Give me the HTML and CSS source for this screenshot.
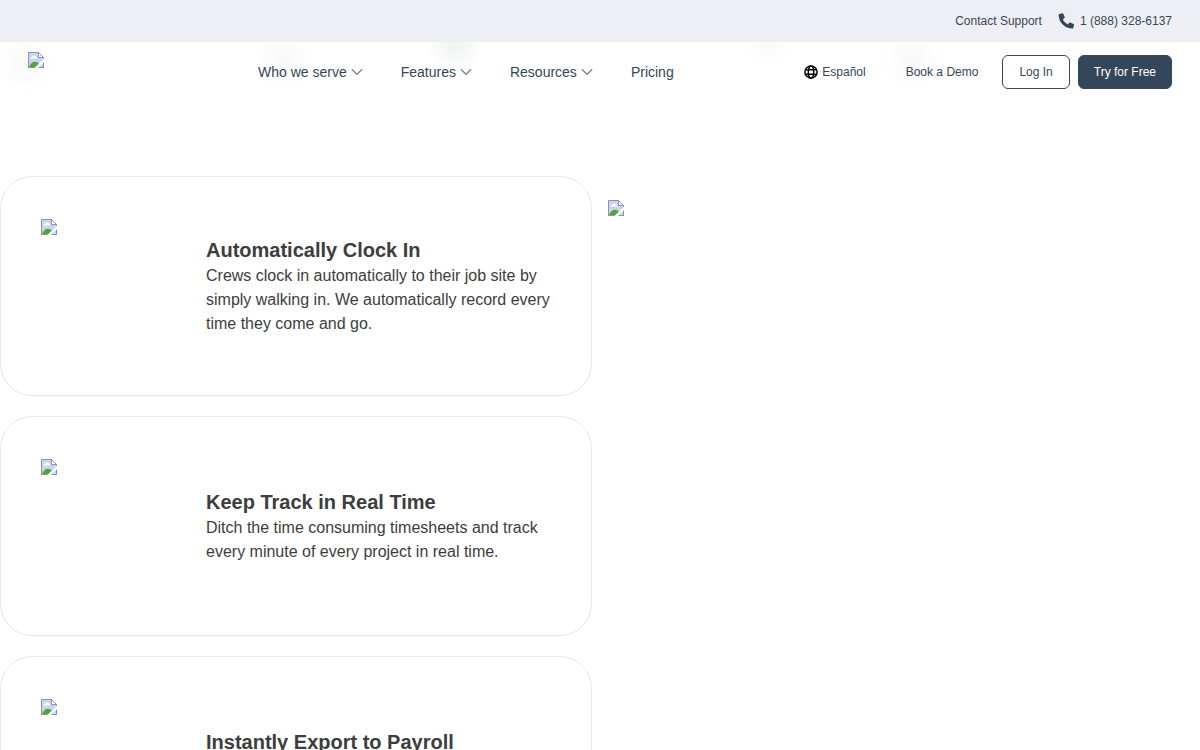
FILE: index.html
```html
<!DOCTYPE html>
<html lang="en">
<head>
    <meta charset="UTF-8">
    <meta name="viewport" content="width=device-width, initial-scale=1.0">
    <title>Time Tracking</title>
    <link rel="stylesheet" href="styles.css">
</head>
<body>
    <svg class="sprite" width="0" height="0" aria-hidden="true">
        <symbol id="picture" viewBox="0 0 16 16">
            <path d="M.5.5h10l5 5v10H.5z" fill="#c6d5f5"/>
            <path d="M2.500 6.500c0-1.200.8-2 2-2 .5-1.400 3-1.400 3.500.2 1.200 0 1.500 1.800.2 1.800z" fill="#fff"/>
            <path d="M1 15.500c1-4 3.500-5.800 6-5.800 2 0 3.500 1 4.500 2.300l-3.500 3.500z" fill="#55a637"/>
            <path d="M10.500.5v5h5z" fill="#fff"/>
            <path d="M.5 16V.5h10l5 5V16M10.500.5v5h5M0 15.500h16" fill="none" stroke="#9093a3"/>
            <path d="M16 6.500V10l-6 6H6.500z" fill="#fff"/>
        </symbol>
        <symbol id="chevron" viewBox="0 0 12 8">
            <path d="M.8 1.300l5.200 5 5.200-5" fill="none" stroke="#7d848b" stroke-width="1.300"/>
        </symbol>
    </svg>

    <header class="header">
        <div class="topbar">
            <a href="#">Contact Support</a>
            <a href="#" class="phone">
                <svg width="16" height="16" viewBox="0 0 16 16" aria-hidden="true">
                    <path d="M1.300.9 4.300.2c.4-.1.800.1 1 .5l1.400 3.400c.1.3 0 .7-.2.900L4.800 6.400a11 11 0 0 0 5 5l1.400-1.700c.2-.3.6-.4.900-.2l3.400 1.400c.4.200.6.600.5 1l-.7 3c-.1.400-.4.700-.8.700C6.900 15.600.6 9.300.6 1.700c0-.4.3-.7.700-.8z" fill="#34475a"/>
                </svg>
                1 (888) 328-6137
            </a>
        </div>
        <div class="navbar">
            <a href="#" class="logo" aria-label="Home">
                <svg width="16" height="16"><use href="#picture"/></svg>
            </a>
            <nav class="menu">
                <button type="button">Who we serve <svg width="12" height="8"><use href="#chevron"/></svg></button>
                <button type="button">Features <svg width="12" height="8"><use href="#chevron"/></svg></button>
                <button type="button">Resources <svg width="12" height="8"><use href="#chevron"/></svg></button>
                <a href="#">Pricing</a>
            </nav>
            <div class="actions">
                <a href="#" class="language">
                    <svg width="14" height="14" viewBox="0 0 14 14" fill="none" stroke="#000" stroke-width="1.500" aria-hidden="true">
                        <circle cx="7" cy="7" r="6.100"/>
                        <ellipse cx="7" cy="7" rx="2.700" ry="6.100"/>
                        <path d="M1.300 4.800h11.400M1.300 9.200h11.400"/>
                    </svg>
                    Español
                </a>
                <a href="#" class="demo">Book a Demo</a>
                <button type="button" class="btn">Log In</button>
                <button type="button" class="btn btn-dark">Try for Free</button>
            </div>
        </div>
    </header>

    <main class="features">
        <div class="cards">
            <section class="card">
                <div class="card-image">
                    <svg width="16" height="16" aria-hidden="true"><use href="#picture"/></svg>
                </div>
                <div class="card-text">
                    <h2>Automatically Clock In</h2>
                    <p>Crews clock in automatically to their job site by simply walking in. We automatically record every time they come and go.</p>
                </div>
            </section>
            <section class="card">
                <div class="card-image">
                    <svg width="16" height="16" aria-hidden="true"><use href="#picture"/></svg>
                </div>
                <div class="card-text">
                    <h2>Keep Track in Real Time</h2>
                    <p>Ditch the time consuming timesheets and track every minute of every project in real time.</p>
                </div>
            </section>
            <section class="card">
                <div class="card-image">
                    <svg width="16" height="16" aria-hidden="true"><use href="#picture"/></svg>
                </div>
                <div class="card-text">
                    <h2>Instantly Export to Payroll</h2>
                    <p>Send approved hours to your payroll provider as soon as the pay period ends.</p>
                </div>
            </section>
        </div>
        <div class="preview">
            <svg width="16" height="16" aria-hidden="true"><use href="#picture"/></svg>
        </div>
    </main>
</body>
</html>
```
FILE: styles.css
```css
body {
    font-family: "Liberation Sans", Arial, sans-serif;
    margin: 0;
    color: #3d3d3d;
    background-color: #fff;
}
svg {
    display: block;
    flex-shrink: 0;
}
.sprite {
    position: absolute;
}
a {
    color: #34475a;
    text-decoration: none;
}
button {
    font-family: inherit;
    cursor: pointer;
}
.header {
    position: sticky;
    top: 0;
    z-index: 10;
}
.topbar {
    display: flex;
    justify-content: flex-end;
    align-items: center;
    gap: 16px;
    height: 42px;
    padding: 0 28px;
    background-color: #eeeff4;
    font-size: 12px;
}
.phone {
    display: flex;
    align-items: center;
    gap: 6px;
}
.navbar {
    display: grid;
    grid-template-columns: 230px 1fr auto;
    align-items: center;
    height: 60px;
    padding: 0 28px;
    background-color: #fff;
    background-image:
        radial-gradient(28px 28px at 25px 22px, #f8f8f8, transparent),
        radial-gradient(30px 30px at 283px 18px, #f8f8f8, transparent),
        radial-gradient(30px 28px at 455px 3px, #f1f2f2, transparent),
        radial-gradient(28px 22px at 768px 0, #f9f9f9, transparent),
        radial-gradient(30px 30px at 912px 16px, #f8f8f8, transparent);
}
.logo {
    align-self: start;
    padding-top: 10px;
}
.menu {
    display: flex;
    align-items: center;
    gap: 38px;
}
.menu a, .menu button {
    display: flex;
    align-items: center;
    gap: 4px;
    padding: 0;
    border: none;
    background: none;
    color: #34475a;
    font-size: 14px;
}
.actions {
    display: flex;
    align-items: center;
    gap: 8px;
    font-size: 12px;
}
.language {
    display: flex;
    align-items: center;
    gap: 4px;
    margin-right: 32px;
}
.demo {
    margin-right: 16px;
}
.btn {
    height: 34px;
    padding: 0 16px;
    border: 1px solid #34475a;
    border-radius: 6px;
    background-color: #fff;
    color: #34475a;
    font-size: 12px;
}
.btn-dark {
    padding: 0 15px;
    background-color: #34475a;
    color: #fff;
}
.features {
    display: grid;
    grid-template-columns: 1fr 1fr;
    gap: 16px;
    padding-top: 74px;
}
.cards {
    display: flex;
    flex-direction: column;
    gap: 20px;
}
.card {
    display: flex;
    box-sizing: border-box;
    min-height: 220px;
    padding: 40px;
    border: 1px solid #e8e8e8;
    border-radius: 32px;
}
.card-image {
    width: 125px;
    margin-right: 40px;
    padding-top: 2px;
    flex-shrink: 0;
}
.card-text {
    align-self: center;
}
.card h2 {
    margin: 0;
    font-size: 20px;
    line-height: 28px;
}
.card p {
    margin: 0;
    font-size: 16px;
    line-height: 24px;
}
.preview {
    padding-top: 24px;
}
```
